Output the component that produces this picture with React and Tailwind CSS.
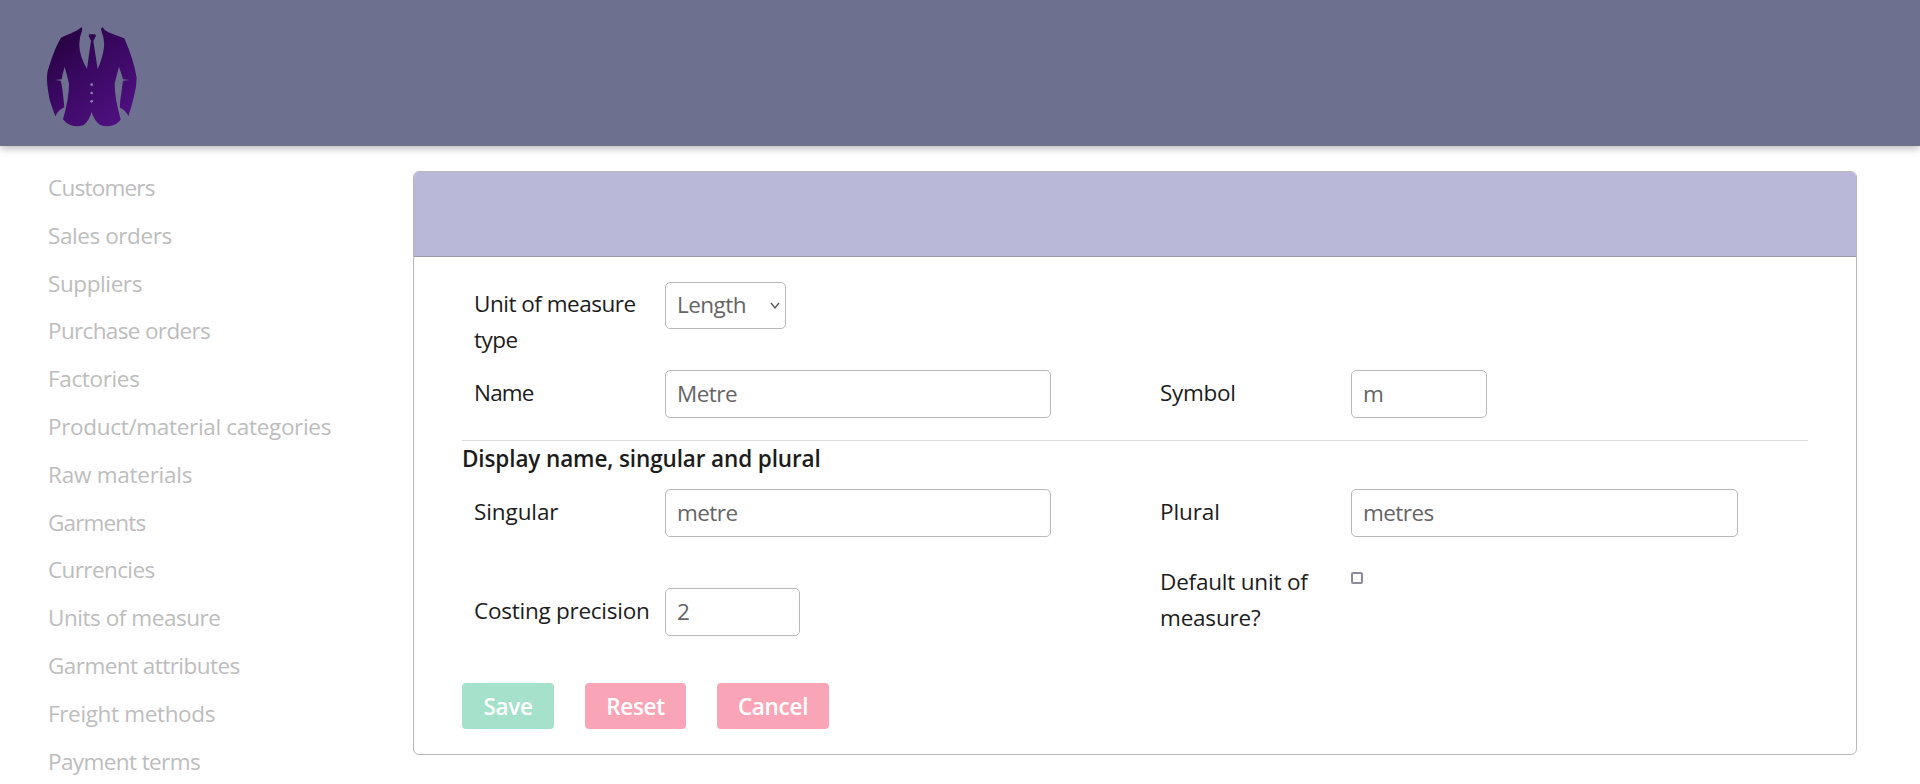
import React from "react";

const navItems = [
  ["Customers", "tracking-[-0.77px]"],
  ["Sales orders", "tracking-[-0.42px]"],
  ["Suppliers", "tracking-[-0.4px]"],
  ["Purchase orders", "tracking-[-0.65px]"],
  ["Factories", "tracking-[-0.35px]"],
  ["Product/material categories", "tracking-[-0.32px]"],
  ["Raw materials", "tracking-[-0.25px]"],
  ["Garments", "tracking-[-0.85px]"],
  ["Currencies", "tracking-[-0.6px]"],
  ["Units of measure", "tracking-[-0.45px]"],
  ["Garment attributes", "tracking-[-0.55px]"],
  ["Freight methods", "tracking-[-0.35px]"],
  ["Payment terms", "tracking-[-0.6px]"],
];

function SuitLogo() {
  return (
    <svg viewBox="50 52 270 300" className="h-[100px] w-[90px]" aria-label="Suit">
      <defs>
        <linearGradient id="suit" x1="0" y1="0" x2="0.75" y2="1">
          <stop offset="0.1" stopColor="#27023f" />
          <stop offset="0.5" stopColor="#3a0862" />
          <stop offset="1" stopColor="#4f1080" />
        </linearGradient>
      </defs>
      <path
        fill="url(#suit)"
        d="M154 52 C136 68 112 74 92 84 C76 110 62 150 52 184 C47 210 52 238 58 270 Q66 296 75 320 Q82 302 102 293 Q99 262 96 238 Q93 218 91 213 L74 211 L94 209 Q97 190 103 172 Q110 196 116 222 Q116 266 98 329 Q106 341 122 347 Q142 353 160 346 Q176 334 184 307 Q192 334 210 346 Q228 353 248 347 Q264 341 271 329 Q253 266 253 222 Q259 196 266 172 Q273 190 278 209 L297 211 L278 213 Q275 232 273 250 Q268 280 269 294 Q287 302 294 320 Q302 296 310 264 Q319 232 319 204 Q310 150 282 86 Q258 78 234 68 Q220 60 216 52 Q210 56 214 66 Q223 88 221 112 Q217 146 202 178 Q196 140 189 94 L197 78 L194 74 L177 74 L175 79 L182 93 Q175 140 170 178 Q148 140 147 108 Q146 84 156 60 Z"
      />
      <g fill="#8f80b4">
        <circle cx="184" cy="225" r="4" />
        <circle cx="184" cy="250" r="4" />
        <circle cx="184" cy="275" r="4" />
      </g>
    </svg>
  );
}

const control =
  "block border border-[#b9b9b9] rounded-[5px] bg-white pl-[11px] pb-[1px] tracking-[-0.55px] text-[#666] outline-none";

function Field({ label, className, labelClass = "", children }) {
  return (
    <div className={"flex items-start " + className}>
      <label className={"w-[191px] shrink-0 leading-9 whitespace-nowrap text-[#1c1c1c] " + labelClass}>{label}</label>
      {children}
    </div>
  );
}

export default function App() {
  return (
    <div className="h-[784px] w-[1920px] overflow-hidden bg-white font-['Open_Sans',sans-serif] text-[22.5px] tracking-[-0.5px]">
      <header className="relative h-[146px] bg-[#6d708f] pt-[27px] pl-[47px] shadow-[0_2px_8px_rgba(0,0,0,0.3)]">
        <SuitLogo />
      </header>
      <div className="flex">
        <nav className="w-[413px] shrink-0 pt-[18px] pl-12">
          <ul>
            {navItems.map(([name, tracking]) => (
              <li key={name} className={"h-[47.8px] leading-[47.8px] whitespace-nowrap text-[#bdbdbd] " + tracking}>
                {name}
              </li>
            ))}
          </ul>
        </nav>
        <main className="mt-[25px] h-[584px] w-[1444px] overflow-hidden rounded-[6px] border border-[#b9b9b9]">
          <div className="h-[85px] border-b border-[#9c9caf] bg-[#b9b8d8]" />
          <form className="px-12 pt-[25px]">
            <div className="h-[88px] pl-3">
              <Field label={<>Unit of measure<br />type</>} labelClass="pt-[4px]" className="">
                <div className="relative">
                  <select className={control + " h-[47px] w-[121px] appearance-none"} defaultValue="Length">
                    <option>Length</option>
                  </select>
                  <svg viewBox="0 0 10 8" className="pointer-events-none absolute top-[20px] right-[6px] h-[8px] w-[10px]" fill="none" stroke="#555" strokeWidth="1.4">
                    <path d="M1 1 L5 6 L9 1" />
                  </svg>
                </div>
              </Field>
            </div>
            <div className="flex h-[70px] pl-3">
              <Field label="Name" labelClass="pt-[5px] tracking-[-0.8px]" className="w-[686px]">
                <input className={control + " h-[48px] w-[386px]"} defaultValue="Metre" />
              </Field>
              <Field label="Symbol" labelClass="pt-[5px] tracking-[-0.3px]" className="">
                <input className={control + " h-[48px] w-[136px]"} defaultValue="m" />
              </Field>
            </div>
            <div className="h-[49px] border-t border-[#dcdcdc] leading-9 font-semibold tracking-[-0.12px] text-[#1c1c1c]">
              Display name, singular and plural
            </div>
            <div className="flex h-[70px] pl-3">
              <Field label="Singular" labelClass="pt-[5px] tracking-[-0.1px]" className="w-[686px]">
                <input className={control + " h-[48px] w-[386px]"} defaultValue="metre" />
              </Field>
              <Field label="Plural" labelClass="pt-[5px] tracking-[-0.1px]" className="">
                <input className={control + " h-[48px] w-[387px]"} defaultValue="metres" />
              </Field>
            </div>
            <div className="flex h-[124px] pl-3">
              <Field label="Costing precision" labelClass="pt-[5px] tracking-[-0.25px]" className="w-[686px] pt-[29px]">
                <input className={control + " h-[48px] w-[135px]"} defaultValue="2" />
              </Field>
              <Field label={<>Default unit of<br />measure?</>} labelClass="tracking-[-0.2px]" className="pt-[5px]">
                <input type="checkbox" className="mt-[8px] h-3 w-3 appearance-none rounded-[2px] border-2 border-[#8d8c9d] bg-white" />
              </Field>
            </div>
            <div className="flex gap-8 font-semibold tracking-[-0.3px] text-white">
              <button type="button" className="h-[46px] w-[92px] rounded-[4px] bg-[#a5e1cb] pt-px">Save</button>
              <button type="button" className="-ml-px h-[46px] w-[101px] rounded-[4px] bg-[#faa5b7] pt-px">Reset</button>
              <button type="button" className="-ml-px h-[46px] w-[112px] rounded-[4px] bg-[#faa5b7] pt-px">Cancel</button>
            </div>
          </form>
        </main>
      </div>
    </div>
  );
}
